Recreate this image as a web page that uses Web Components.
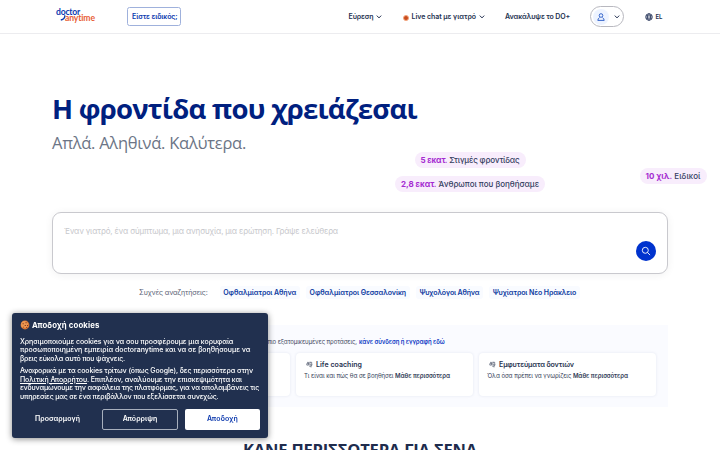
<!DOCTYPE html>
<html lang="el"><head><meta charset="utf-8"><title>doctoranytime</title>
<style>html,body{margin:0;background:#fff;overflow:hidden;height:450px}body{font-family:Inter,"Open Sans",sans-serif;color:#243150}</style></head>
<body><home-page></home-page>
<script>
const define=(name,html,setup)=>customElements.define(name,class extends HTMLElement{
 constructor(){super();const t=document.createElement('template');t.innerHTML=html;this.attachShadow({mode:'open'}).append(t.content.cloneNode(true));}
 connectedCallback(){if(setup)setup(this,this.shadowRoot);}
});
// Single line of text whose tracking is set so that it fills the width given in "w".
define('fit-text',`<style>:host{display:block;white-space:nowrap;flex:none}span{display:inline-block}</style><span><slot></slot></span>`,(el,root)=>{
 const w=+el.getAttribute('w');el.style.width=w+'px';
 const s=root.querySelector('span'),n=el.textContent.length;
 el.style.letterSpacing='0px';
 el.style.letterSpacing=((w-s.getBoundingClientRect().width)/n).toFixed(4)+'px';
});
define('chevron-icon',`<style>:host{display:block;width:6px;height:4px;flex:none}svg{display:block}</style><svg width="6" height="4" viewBox="0 0 6 4" fill="none" stroke="#243150" stroke-width="1"><path d="M.8.6 3 2.9 5.2.6"/></svg>`);
define('brand-logo',`<style>:host{display:block;width:40px;height:15px;font:700 8.6px/6px Lato,sans-serif}
.a{color:#0c39ae;display:block;height:6px}.b{color:#e85d35;display:flex;align-items:flex-start;height:8px}svg{margin:0 0 0 4px;width:6px;height:6px;flex:none}</style>
<fit-text class="a" w="24">doctor</fit-text><div class="b"><svg viewBox="0 0 6 6" fill="none" stroke="#0c39ae" stroke-width="1.3"><path d="M4.8.2Q5.2 4 .8 5"/></svg><fit-text w="30" style="margin-left:-1px">anytime</fit-text></div>`);
define('site-header',`<style>:host{display:flex;box-sizing:border-box;height:34px;border-bottom:1px solid #ececef;align-items:center;padding:0 0 0 56px;font-size:7px;font-weight:600;line-height:10px}
.pro{box-sizing:border-box;width:54px;height:19px;border:1px solid #9fb1dc;border-radius:2.5px;margin-left:31px;padding:3.5px 0 0 4px;color:#0c39ae}
nav{display:flex;align-items:center;margin-left:167.5px}nav>*{flex:none}
.live{width:4px;height:4px;border-radius:50%;background:#c84c1d;border:1.3px solid #f4a77f;margin:2px 2.5px 0 21px}
.user{box-sizing:border-box;width:34px;height:21px;border:1px solid #b8b8bf;border-radius:11px;margin-left:19.5px;display:flex;align-items:center;padding:0 3px 0 2px;justify-content:space-between}
.av{width:16px;height:16px;border-radius:50%;background:#edf3ff;display:grid;place-items:center}
.lang{display:flex;align-items:center;gap:2.5px;margin-left:21.5px;font-size:6px}svg{display:block;flex:none}</style>
<brand-logo></brand-logo><div class="pro"><fit-text w="45.5">Είστε ειδικός;</fit-text></div>
<nav><fit-text w="25">Εύρεση</fit-text><chevron-icon style="margin-left:2.5px"></chevron-icon><i class="live"></i><fit-text w="64.5">Live chat με γιατρό</fit-text><chevron-icon style="margin-left:3px"></chevron-icon><fit-text w="65" style="margin-left:20px">Ανακάλυψε το DO+</fit-text>
<div class="user"><div class="av"><svg width="8" height="8" viewBox="0 0 8 8" fill="none" stroke="#2457c5" stroke-width=".9"><circle cx="4" cy="2.5" r="1.8"/><path d="M2.6 4.6Q1 5.2.8 7.4h6.4Q7 5.2 5.4 4.6"/></svg></div><chevron-icon></chevron-icon></div>
<div class="lang"><svg width="8" height="8" viewBox="0 0 8 8" fill="none" stroke="#1b2a50" stroke-width=".8"><circle cx="4" cy="4" r="3.3"/><ellipse cx="4" cy="4" rx="1.5" ry="3.3"/><path d="M.9 2.9h6.2M.9 5.1h6.2"/></svg><fit-text w="7">EL</fit-text></div></nav>`);
define('stat-pill',`<style>:host{display:block;box-sizing:border-box;height:16px;border-radius:8px;background:#f8edfc;padding:2px 6px 0;font-size:8px;line-height:13px;font-weight:500;width:max-content;color:#35405f}</style><slot></slot>`);
define('hero-section',`<style>:host{display:block;padding:58px 0 0 52px;height:120px;box-sizing:content-box}
h1{margin:0;font:700 27.5px/34px "Open Sans",sans-serif;color:#00207f}.sub{font:400 16.5px/22px "Open Sans",sans-serif;color:#6c7586;margin-top:6px}
.stats{display:flex;margin-top:-3px;justify-content:space-between;padding:1px 13.5px 0 343px;align-items:flex-start}.left{display:flex;flex-direction:column;gap:8px}.left stat-pill:first-child{margin-left:19.5px}b{color:#a52bd1;font-weight:700}.far{margin-top:16px}</style>
<h1><fit-text w="365">Η φροντίδα που χρειάζεσαι</fit-text></h1><fit-text class="sub" w="194">Απλά. Αληθινά. Καλύτερα.</fit-text>
<div class="stats"><div class="left"><stat-pill><fit-text w="99"><b>5 εκατ.</b> Στιγμές φροντίδας</fit-text></stat-pill><stat-pill><fit-text w="138"><b>2,8 εκατ.</b> Άνθρωποι που βοηθήσαμε</fit-text></stat-pill></div><stat-pill class="far"><fit-text w="55"><b>10 χιλ.</b> Ειδικοί</fit-text></stat-pill></div>`);
define('search-box',`<style>:host{display:flex;box-sizing:border-box;width:616px;height:62px;margin-left:52px;border:1px solid #c9c9ce;border-radius:9px;background:#fff;box-shadow:0 1px 9px #0000000f;justify-content:space-between;padding:12px 11.5px 0 11px;font-size:8px;line-height:13px;color:#c7c8cc}
button{width:20px;height:20px;border:0;border-radius:50%;background:#0033ce;padding:0;display:grid;place-items:center;margin-top:16px}</style>
<fit-text w="274">Έναν γιατρό, ένα σύμπτωμα, μια ανησυχία, μια ερώτηση. Γράψε ελεύθερα</fit-text><button aria-label="Αναζήτηση"><svg width="10" height="10" viewBox="0 0 10 10" fill="none" stroke="#fff" stroke-width=".9"><circle cx="4.3" cy="4.3" r="3"/><path d="m6.5 6.5 2.6 2.6"/></svg></button>`);
define('tag-link',`<style>:host{display:block;background:#f9fbff;border-radius:3px;padding:1px 3.5px;color:#0c39a0;font-weight:600}</style><slot></slot>`);
define('frequent-searches',`<style>:host{display:flex;align-items:center;margin:11px 0 0 139px;height:14px;font-size:7px;line-height:11px;color:#596275;gap:6.3px}tag-link:first-of-type{margin-left:6px}</style>
<fit-text w="68.5">Συχνές αναζητήσεις:</fit-text><tag-link><fit-text w="73">Οφθαλμίατροι Αθήνα</fit-text></tag-link><tag-link><fit-text w="96.5">Οφθαλμίατροι Θεσσαλονίκη</fit-text></tag-link><tag-link><fit-text w="60">Ψυχολόγοι Αθήνα</fit-text></tag-link><tag-link><fit-text w="83.5">Ψυχίατροι Νέο Ηράκλειο</fit-text></tag-link>`);
define('topic-card',`<style>:host{display:block;box-sizing:border-box;height:43px;border-radius:4px;background:#fff;box-shadow:0 0 3px #243a7a1c;padding:5px 8px;font-size:6px;line-height:9px;color:#303b55}
.t{display:flex;align-items:center;gap:3px;height:12px;padding-left:2px;font-size:7px;font-weight:600;color:#27324f}.d{margin-top:.5px}svg{display:block}</style>
<div class="t"><svg width="7" height="7" viewBox="0 0 7 7" fill="none" stroke="#333d54" stroke-width=".6"><path d="M1 1.4h1.6v2.7H.8V2.6h1.8M3.9.8v3.1h1.8V1.3H3.9M3 5.1h2.2l1-1.4M5 5.1v1.3"/></svg><slot name="title"></slot></div><div class="d"><slot></slot></div>`);
define('topics-panel',`<style>:host{display:block;box-sizing:border-box;margin:26px 52px 0;width:616px;height:82px;background:#fafbff;padding:12px 12px 0;font-size:6px;line-height:10px;color:#3c465c}
.i{display:flex;gap:2px;padding-left:193px;margin-bottom:6px}.i b{color:#0c39c4}b{font-weight:600}.g{display:grid;gap:6px;grid-template-columns:repeat(3,177px);justify-content:end}</style>
<div class="i"><fit-text w="100">Για πιο εξατομικευμένες προτάσεις,</fit-text><b><fit-text w="85.5">κάνε σύνδεση ή εγγραφή εδώ</fit-text></b></div>
<div class="g"><topic-card></topic-card><topic-card><fit-text slot="title" w="46">Life coaching</fit-text><fit-text w="146">Τι είναι και πώς θα σε βοηθήσει <b>Μάθε περισσότερα</b></fit-text></topic-card><topic-card><fit-text slot="title" w="75">Εμφυτεύματα δοντιών</fit-text><fit-text w="141">Όλα όσα πρέπει να γνωρίζεις <b>Μάθε περισσότερα</b></fit-text></topic-card></div>`);
define('cookie-banner',`<style>:host{position:fixed;left:12px;top:312.5px;box-sizing:border-box;width:256px;height:125.5px;background:#21304f;border-radius:3px;box-shadow:0 1px 6px #0007;padding:6.5px 8px 8px;color:#fff;font-size:7px;line-height:8.6px}
h2{display:flex;gap:2px;align-items:center;margin:0 0 6.5px;height:12px;font-size:7.8px;line-height:12px;font-weight:700}p{margin:0 0 4px;font-weight:500}.b{display:grid;grid-template-columns:75px 75.5px 75px;gap:7.25px;font-weight:600;margin-top:7px;line-height:10px}
.b div{box-sizing:border-box;height:21px;border-radius:2px;display:grid;place-items:center}.r{border:1px solid #a7afbd}.y{background:#fff;color:#0c39ae}u{text-underline-offset:1px}svg{display:block}</style>
<h2><svg width="10" height="10" viewBox="0 0 10 10"><circle cx="5" cy="5" r="4.4" fill="#d87532"/><circle cx="4.5" cy="4.4" r="3.5" fill="#ec9650"/><path d="M2.6 3.2h1.1v1.1H2.6zM5.5 2.2h1.2v1H5.5zM4.7 5h1.2v1.1H4.7zM7 5.1h1v1H7zM3.1 6.7h1v.9h-1zM6 7.3h1v.8H6z" fill="#7e351f"/></svg><fit-text w="67.5">Αποδοχή cookies</fit-text></h2>
<p><fit-text w="213.5">Χρησιμοποιούμε cookies για να σου προσφέρουμε μια κορυφαία</fit-text><fit-text w="230.5">προσωποποιημένη εμπειρία doctoranytime και να σε βοηθήσουμε να</fit-text><fit-text w="105">βρεις εύκολα αυτό που ψάχνεις.</fit-text></p>
<p><fit-text w="233">Αναφορικά με τα cookies τρίτων (όπως Google), δες περισσότερα στην</fit-text><fit-text w="222"><u>Πολιτική Απορρήτου</u>. Επιπλέον, αναλύουμε την επισκεψιμότητα και</fit-text><fit-text w="239">ενδυναμώνουμε την ασφάλεια της πλατφόρμας, για να απολαμβάνεις τις</fit-text><fit-text w="198.5">υπηρεσίες μας σε ένα περιβάλλον που εξελίσσεται συνεχώς.</fit-text></p>
<div class="b"><div><fit-text w="45">Προσαρμογή</fit-text></div><div class="r"><fit-text w="34.5">Απόρριψη</fit-text></div><div class="y"><fit-text w="31">Αποδοχή</fit-text></div></div>`);
define('home-page',`<style>:host{display:block;width:720px;height:450px;overflow:hidden}.more{margin:31px 0 0 243px;font:700 16.5px/24px "Open Sans",sans-serif;color:#202c4d}</style>
<site-header></site-header><hero-section></hero-section><search-box></search-box><frequent-searches></frequent-searches><topics-panel></topics-panel><fit-text class="more" w="234">ΚΑΝΕ ΠΕΡΙΣΣΟΤΕΡΑ ΓΙΑ ΣΕΝΑ</fit-text><cookie-banner></cookie-banner>`);
</script></body></html>
